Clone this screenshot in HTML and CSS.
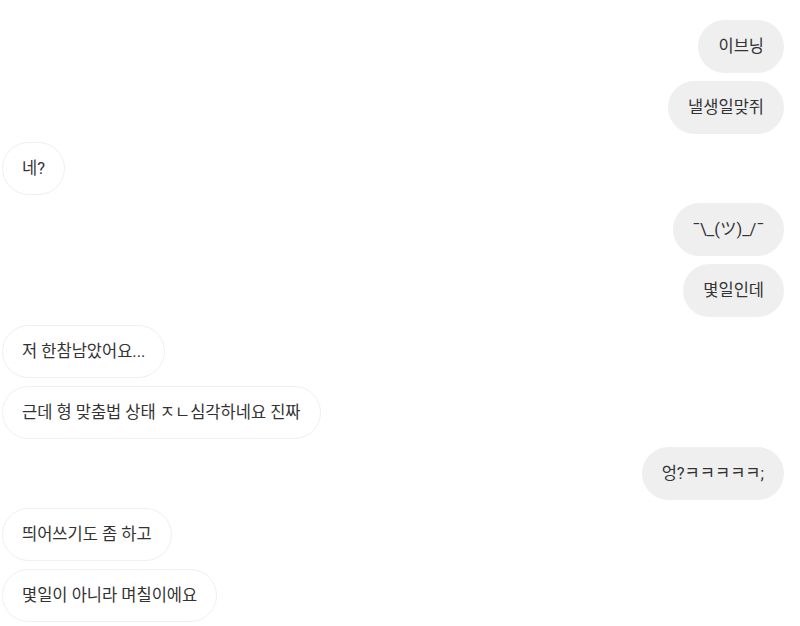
FILE: index.html
```html
<!DOCTYPE html>
<html lang="ko">
<head>
    <meta charset="UTF-8">
    <meta name="viewport" content="width=device-width, initial-scale=1.0">
    <title>채팅</title>
    <link rel="stylesheet" href="styles.css">
</head>
<body>
    <div class="chat">
        <div class="msg mine"><span class="bubble">이브닝</span></div>
        <div class="msg mine"><span class="bubble">낼생일맞쥐</span></div>
        <div class="msg theirs"><span class="bubble">네?</span></div>
        <div class="msg mine"><span class="bubble">¯\_(ツ)_/¯</span></div>
        <div class="msg mine"><span class="bubble">몇일인데</span></div>
        <div class="msg theirs"><span class="bubble">저 한참남았어요...</span></div>
        <div class="msg theirs"><span class="bubble">근데 형 맞춤법 상태 ㅈㄴ심각하네요 진짜</span></div>
        <div class="msg mine"><span class="bubble">엉?ㅋㅋㅋㅋㅋ;</span></div>
        <div class="msg theirs"><span class="bubble">띄어쓰기도 좀 하고</span></div>
        <div class="msg theirs"><span class="bubble">몇일이 아니라 며칠이에요</span></div>
    </div>
</body>
</html>
```

FILE: styles.css
```css
body {
    margin: 0;
    background: #ffffff;
    font-family: Roboto, "Noto Sans CJK KR", sans-serif;
    color: #333333;
}

.chat {
    display: flex;
    flex-direction: column;
    gap: 8px;
    padding: 20px 16px 0 2px;
}

.msg {
    display: flex;
}

.msg.mine {
    justify-content: flex-end;
}

.msg.theirs {
    justify-content: flex-start;
}

.bubble {
    font-size: 16.5px;
    line-height: 25px;
    padding: 14px 20px;
    border-radius: 27px;
    white-space: nowrap;
}

.mine .bubble {
    background-color: #efefef;
}

.theirs .bubble {
    background-color: #ffffff;
    border: 1px solid #efefef;
    padding: 13px 19px;
}
```
